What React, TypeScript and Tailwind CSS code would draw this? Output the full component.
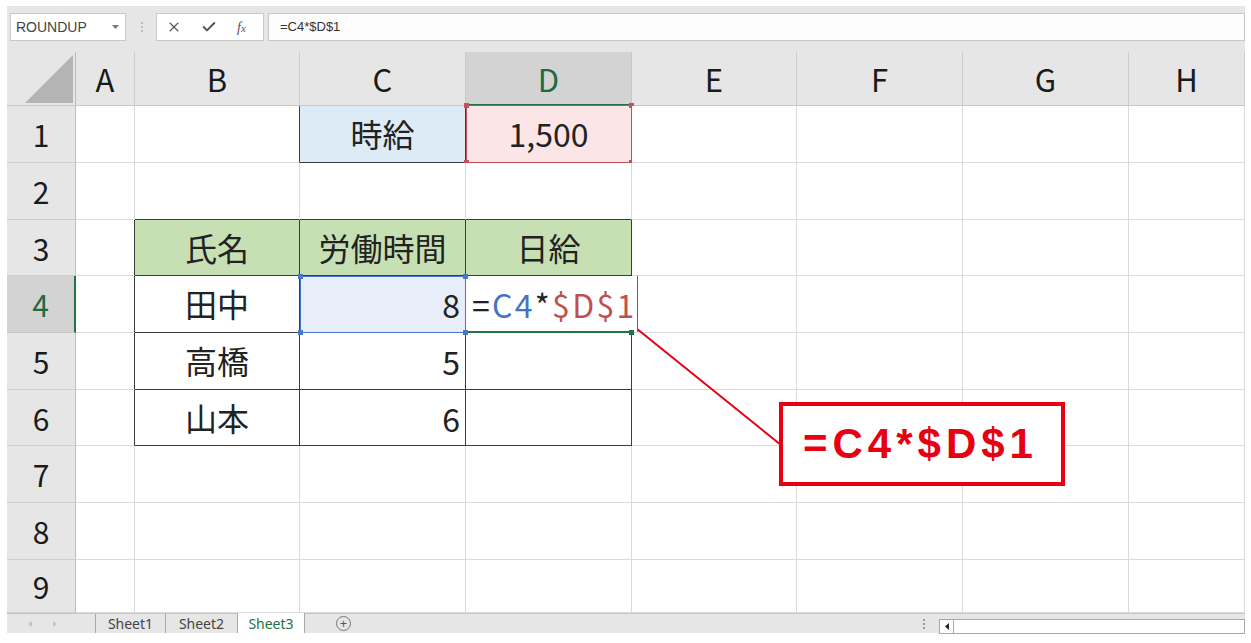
import React from "react";
import { X, Check } from "lucide-react";

const COLS = ["A", "B", "C", "D", "E", "F", "G", "H"];
const ROWS = [1, 2, 3, 4, 5, 6, 7, 8, 9];

const gridR = "border-r-[#dadada]";
const darkR = "border-r-[#3c3c3c]";
const gridB = "border-b-[#dadada]";
const darkB = "border-b-[#3c3c3c]";

function isDarkRight(r: number, c: string) {
  if (r >= 3 && r <= 6 && ["A", "B", "C", "D"].includes(c)) return true;
  if (r === 1 && (c === "B" || c === "C")) return true;
  return false;
}
function isDarkBottom(r: number, c: string) {
  if (r >= 2 && r <= 6 && ["B", "C", "D"].includes(c)) return true;
  if (r === 1 && c === "C") return true;
  return false;
}

const BG: Record<string, string> = {
  "1C": "bg-[#ddebf7]",
  "1D": "bg-[#fbe5e7]",
  "3B": "bg-[#c6e0b4]",
  "3C": "bg-[#c6e0b4]",
  "3D": "bg-[#c6e0b4]",
  "4C": "bg-[#e7eef9]",
};

const CENTER: Record<string, string> = {
  "1C": "時給",
  "1D": "1,500",
  "3B": "氏名",
  "3C": "労働時間",
  "3D": "日給",
  "4B": "田中",
  "5B": "高橋",
  "6B": "山本",
};
const RIGHT: Record<string, string> = {
  "4C": "8",
  "5C": "5",
  "6C": "6",
};

function Handles({ color }: { color: string }) {
  return (
    <>
      <div className={`absolute left-[-3px] top-[-3px] h-[5px] w-[5px] ${color}`} />
      <div className={`absolute right-[-3px] top-[-3px] h-[5px] w-[5px] ${color}`} />
      <div className={`absolute left-[-3px] bottom-[-3px] h-[5px] w-[5px] ${color}`} />
      <div className={`absolute right-[-3px] bottom-[-3px] h-[5px] w-[5px] ${color}`} />
    </>
  );
}

function Cell({ r, c }: { r: number; c: string }) {
  const key = `${r}${c}`;
  const cls = [
    "relative flex items-center border-r border-b",
    isDarkRight(r, c) ? darkR : gridR,
    isDarkBottom(r, c) ? darkB : gridB,
    BG[key] ?? "bg-white",
    RIGHT[key] ? "justify-end pr-[5px]" : "justify-center",
  ].join(" ");
  return (
    <div className={cls}>
      {CENTER[key] && <span className="mt-[-2px]">{CENTER[key]}</span>}
      {RIGHT[key] && <span>{RIGHT[key]}</span>}
      {key === "1D" && (
        <div className="absolute left-0 top-[-1px] right-[-1px] bottom-[-1px] border-[1.5px] border-[#c4505a]">
          <Handles color="bg-[#c4505a]" />
        </div>
      )}
      {key === "4C" && (
        <div className="absolute z-20 left-0 top-0 right-[-1px] bottom-[-1px] border-[1.5px] border-[#4a78c8]">
          <Handles color="bg-[#4a78c8]" />
        </div>
      )}
      {key === "4D" && (
        <>
          <div className="absolute z-10 left-0 top-0 h-[56px] w-[172px] bg-white border-r border-r-[#666] flex items-center pl-[6px] whitespace-nowrap tracking-[2.3px]">
            <span className="text-[#222]">=</span>
            <span className="text-[#4472c4]">C4</span>
            <span className="text-[#222]">*</span>
            <span className="text-[#c0504d]">$D$1</span>
          </div>
          <div className="absolute z-10 left-[-1px] bottom-[-1px] h-[2px] w-[167px] bg-[#217346]" />
          <div className="absolute z-10 left-[163px] bottom-[-3px] h-[5px] w-[5px] bg-[#217346]" />
        </>
      )}
    </div>
  );
}

export default function App() {
  return (
    <div className="relative h-[643px] w-[1251px] overflow-hidden bg-white font-['Noto_Sans_CJK_JP','Noto_Sans',sans-serif]">
      <div className="ml-[7px] mt-[6px] w-[1238px]">
        {/* Formula bar */}
        <div className="flex h-[46px] bg-[#e6e6e6] pt-[7px]">
          <div className="ml-[3px] flex h-[28px] w-[116px] items-center justify-between border border-[#c8c8c8] bg-white pl-[5px] pr-[6px]">
            <span className="text-[14px] text-[#444] font-['Liberation_Sans',sans-serif]">ROUNDUP</span>
            <svg width="7" height="4" viewBox="0 0 7 4">
              <path d="M0 0 L7 0 L3.5 4 Z" fill="#777" />
            </svg>
          </div>
          <div className="ml-[12px] flex h-[28px] w-[8px] flex-col items-center justify-center gap-[2px]">
            <div className="h-[2px] w-[2px] bg-[#bdbdbd]" />
            <div className="h-[2px] w-[2px] bg-[#bdbdbd]" />
            <div className="h-[2px] w-[2px] bg-[#bdbdbd]" />
          </div>
          <div className="ml-[10px] flex h-[28px] w-[108px] items-center border border-[#c8c8c8] bg-white">
            <X size={16} strokeWidth={1.7} color="#555" className="ml-[9px]" />
            <Check size={16} strokeWidth={3} color="#555" className="ml-[19px]" />
            <span className="ml-[20px] italic text-[14px] text-[#555] font-['Liberation_Serif',serif]">
              f<span className="text-[11px]">x</span>
            </span>
          </div>
          <div className="ml-[4px] flex h-[28px] flex-1 items-center border border-[#c8c8c8] bg-[#fcfcfc] pl-[11px]">
            <span className="text-[13px] text-[#333] font-['Liberation_Sans',sans-serif]">=C4*$D$1</span>
          </div>
        </div>

        {/* Sheet grid */}
        <div className="grid grid-cols-[69px_59px_165px_166px_166px_165px_166px_166px_116px] grid-rows-[54px_57px_57px_56px_57px_57px_56px_57px_57px_53px] text-[32px] text-[#222] leading-none">
          <div className="relative bg-[#e6e6e6] border-r border-r-[#bdbdbd] border-b border-b-[#c8c8c8]">
            <svg className="absolute left-[18px] top-[3px]" width="49" height="49" viewBox="0 0 49 49">
              <path d="M48 0 L48 48 L0 48 Z" fill="#b4b4b4" />
            </svg>
          </div>
          {COLS.map((c) =>
            c === "D" ? (
              <div
                key={c}
                className="flex items-center justify-center bg-[#d3d3d3] border-r border-r-[#c8c8c8] border-b-2 border-b-[#217346] text-[31px] text-[#1f6b40]"
              >
                <span>{c}</span>
              </div>
            ) : (
              <div
                key={c}
                className="flex items-center justify-center bg-[#e6e6e6] border-r border-r-[#cccccc] border-b border-b-[#c8c8c8] text-[31px] text-[#1a1a1a]"
              >
                <span>{c}</span>
              </div>
            )
          )}
          {ROWS.map((r) => (
            <React.Fragment key={r}>
              {r === 4 ? (
                <div className="flex items-center justify-center bg-[#d3d3d3] border-r-2 border-r-[#217346] border-b border-b-[#c8c8c8] text-[30px] text-[#1f6b40]">
                  <span>{r}</span>
                </div>
              ) : (
                <div className="flex items-center justify-center bg-[#e6e6e6] border-r border-r-[#bdbdbd] border-b border-b-[#cfcfcf] text-[30px] text-[#1a1a1a]">
                  <span>{r}</span>
                </div>
              )}
              {COLS.map((c) => (
                <Cell key={c} r={r} c={c} />
              ))}
            </React.Fragment>
          ))}
        </div>

        {/* Sheet tabs */}
        <div className="flex h-[20px] items-stretch border-t border-t-[#c6c6c6] bg-[#e6e6e6] text-[14px] font-['Noto_Sans','Liberation_Sans',sans-serif]">
          <div className="flex w-[88px] items-center">
            <svg className="ml-[21px]" width="4" height="6" viewBox="0 0 4 6">
              <path d="M4 0 L4 6 L0 3 Z" fill="#c4c4c4" />
            </svg>
            <svg className="ml-[21px]" width="4" height="6" viewBox="0 0 4 6">
              <path d="M0 0 L0 6 L4 3 Z" fill="#c4c4c4" />
            </svg>
          </div>
          <div className="flex w-[70px] items-center justify-center border-l border-l-[#a8a8a8] text-[#444]">Sheet1</div>
          <div className="flex w-[72px] items-center justify-center border-l border-l-[#a8a8a8] text-[#444]">Sheet2</div>
          <div className="flex w-[68px] items-center justify-center border-l border-r border-[#a8a8a8] bg-white text-[#217346] mt-[-1px]">Sheet3</div>
          <div className="ml-[31px] flex items-center">
            <div className="flex h-[15px] w-[15px] items-center justify-center rounded-full border border-[#777] text-[13px] leading-none text-[#555]">
              +
            </div>
          </div>
          <div className="ml-[572px] flex flex-col items-center justify-center gap-[2px]">
            <div className="h-[2px] w-[2px] bg-[#9a9a9a]" />
            <div className="h-[2px] w-[2px] bg-[#9a9a9a]" />
            <div className="h-[2px] w-[2px] bg-[#9a9a9a]" />
          </div>
          <div className="ml-[14px] mt-[5px] flex h-[15px] flex-1 border border-[#a8a8a8] bg-white">
            <div className="flex w-[14px] items-center justify-center border-r border-r-[#a8a8a8]">
              <svg width="4" height="7" viewBox="0 0 4 7">
                <path d="M4 0 L4 7 L0 3.5 Z" fill="#222" />
              </svg>
            </div>
          </div>
        </div>
      </div>

      {/* Callout */}
      <svg className="absolute left-0 top-0 pointer-events-none" width="1251" height="643">
        <line x1="626" y1="320" x2="781" y2="445" stroke="#e60012" strokeWidth="2" />
        <circle cx="626" cy="320" r="4" fill="#e60012" />
      </svg>
      <div className="absolute left-[779px] top-[402px] flex h-[84px] w-[286px] items-center border-[4px] border-[#e60012] bg-white pl-[20px]">
        <span className="text-[42px] font-bold leading-none tracking-[5px] text-[#e60012] font-['Liberation_Sans','Noto_Sans',sans-serif]">
          =C4*$D$1
        </span>
      </div>
    </div>
  );
}
